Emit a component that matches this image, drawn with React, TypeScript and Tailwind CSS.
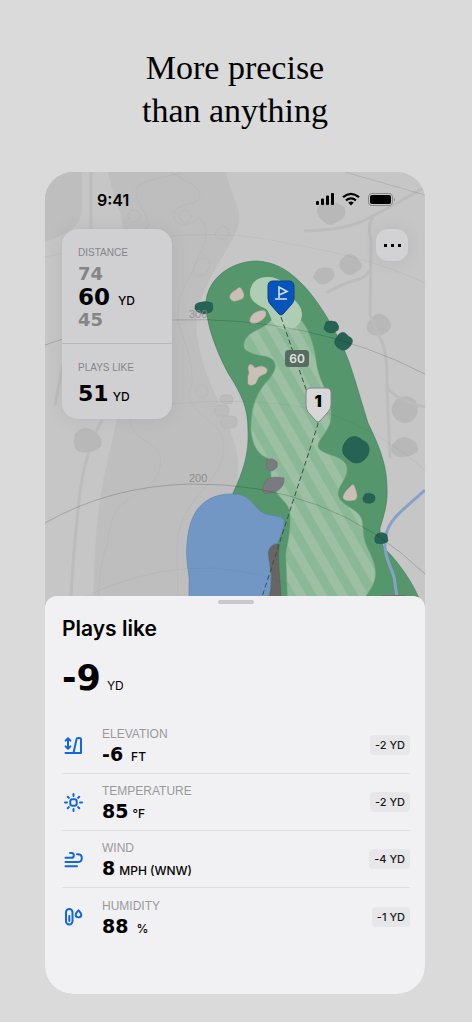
import React from "react";

const sans = "font-['Inter',sans-serif]";
const label = "font-['Liberation_Sans',sans-serif]";
const wide = "font-['DejaVu_Sans',sans-serif] font-bold";

function HoleMap() {
  return (
    <svg
      className="absolute inset-0 h-full w-full"
      viewBox="45 172 380 440"
      preserveAspectRatio="xMidYMin slice"
      role="img"
      aria-label="Hole map"
    >
      <defs>
        <pattern id="mow" width="18" height="18" patternUnits="userSpaceOnUse" patternTransform="rotate(-30 250 340)">
          <rect width="18" height="18" fill="#8bb896" />
          <rect width="9" height="18" fill="#9dbfa3" />
        </pattern>
      </defs>
      <rect x="0" y="100" width="500" height="550" fill="#c6c6c6" />

      <g fill="#bebebe">
        <path d="M45 172H82V208Q82 219 74 227Q66 234 58 237L45 242Z" />
        <path d="M108 172H226C231 197 243 208 238 227C230 248 215 265 205 290C195 310 194 330 201 355C208 385 225 410 232 436C240 458 240 475 233 497L250 612H93C94 545 98 500 106 468C116 425 122 400 123 360C123 300 127 235 120 212Q115 202 108 172Z" />
      </g>
      <g fill="#b8b8b8" stroke="#b0b0b0" strokeWidth=".6" strokeDasharray="1 1">
        <path d="M318 207Q325 200 336 203L344 207Q347 214 342 219L333 224Q328 226 323 221Q315 214 318 207Z" />
        <path d="M341 260Q348 251 355 256L361 263Q363 269 356 272Q350 278 344 272Q337 267 341 260Z" />
        <path d="M317 270Q324 266 332 269Q336 275 332 280Q324 286 318 283L313 277Z" />
        <path d="M372 318Q377 311 385 316Q394 324 389 330Q381 338 371 334Q362 328 372 318Z" />
        <path d="M396 400Q406 393 415 400Q421 411 413 420Q404 426 396 419Q388 410 396 400Z" />
        <path d="M393 444Q402 433 412 440Q420 445 417 452Q406 459 396 456Q388 450 393 444Z" />
        <path d="M75 434Q83 425 92 430Q103 436 101 446Q94 453 84 452Q74 452 74 442Z" />
      </g>
      <g fill="#bcbcbc" stroke="#b2b2b2" strokeWidth=".6">
        <rect x="220" y="395" width="13" height="9" rx="4" />
        <rect x="215" y="405" width="14" height="11" rx="5" />
        <rect x="221" y="416" width="16" height="12" rx="5" />
      </g>
      <g fill="none" stroke="#bcbcbc" strokeWidth="3">
        <path d="M304 231C335 230 352 227 369 218L399 202L425 187" />
        <path d="M373 217Q367 225 371 240L370 315Q376 329 382 342Q388 355 387 390L390 458" />
        <path d="M326 293Q341 284 356 280Q366 278 371 269M387 388Q400 402 425 407" />
        <path d="M91 172V229M102 420L96 432M89 452Q81 475 78 510Q73 555 70 612M66 350L55 405" />
      </g>
      <g fill="none" stroke="#b1b1b1" strokeWidth=".7" strokeDasharray="1.5 1">
        <path d="M182 172C166 178 137 180 136 190C135 203 151 218 148 226C143 239 120 220 110 240" />
        <path d="M170 172Q196 185 200 193C201 209 173 200 174 217C175 227 190 226 199 218C210 226 207 240 198 258C188 285 173 297 179 325C186 347 193 360 192 385C185 400 190 405 214 425C231 441 225 463 207 485C190 505 177 520 177 550L178 612" />
        <path d="M130 419C132 441 153 439 160 455C163 476 151 485 135 495C111 508 110 525 107 545C99 568 98 590 99 612" />
        <circle cx="134" cy="216" r="6" />
        <circle cx="185" cy="216" r="6" />
        <path d="M218 230Q220 225 226 227Q232 234 226 239L218 239Q213 235 218 230Z" />
        <ellipse cx="202" cy="267" rx="7" ry="10" transform="rotate(35 202 267)" />
        <circle cx="202" cy="391" r="6" />
      </g>

      <path
        d="M257 261C231 261 207 279 206 303C206 325 217 352 228 373C242 395 248 408 248 430C249 453 244 470 233 493L250 612H424C416 585 399 564 390 554C381 546 380 540 380 528C384 515 388 503 387 487C387 462 376 440 368 423C358 391 352 367 343 347C329 318 313 294 300 282C286 268 273 262 257 261Z"
        fill="#56966d"
        stroke="#3d7a55"
        strokeWidth=".6"
      />
      <path
        d="M272 319C266 329 250 330 245 340C240 352 253 354 264 356C275 358 280 365 270 378C255 394 251 408 251 430C252 443 257 455 268 458C273 466 269 475 273 487C279 500 289 501 290 514C291 541 285 546 286 560L288 612H357L365 597C378 581 378 571 370 553C362 539 364 532 362 520C358 507 338 506 338 493C339 484 348 478 347 468C345 454 321 456 318 447C317 439 331 431 331 416C332 398 320 383 317 367C315 351 312 335 302 321Z"
        fill="url(#mow)"
        stroke="#75a886"
        strokeWidth=".5"
      />
      <path
        d="M266 277C256 277 250 285 250 293C250 302 260 306 266 309C270 313 270 318 274 324C284 334 301 330 302 315C302 307 298 303 292 298C290 284 278 276 266 277Z"
        fill="#aecdb2"
      />
      <g fill="#cbbeb5" stroke="#b5aaa0" strokeWidth=".5">
        <path d="M236 290Q240 285 242 290Q247 298 239 300Q232 303 230 298Q229 293 236 290Z" />
        <path d="M253 314Q260 309 265 311Q268 315 262 320Q253 326 250 322Q249 318 253 314Z" />
        <path d="M249 365Q252 363 255 368Q263 364 267 369Q268 374 262 375Q258 376 256 383Q252 387 248 384L248 376Q250 373 248 368Z" />
        <path d="M350 487Q354 482 355 488Q359 497 355 500Q345 502 343 498Q343 493 350 487Z" />
      </g>
      <g fill="#7b7a80" stroke="#68696b" strokeWidth=".6">
        <path d="M267 460Q272 457 277 462Q279 468 272 471Q264 470 267 460Z" />
        <path d="M267 479Q273 476 284 478Q285 486 277 491L265 494Q261 489 264 484Z" />
      </g>
      <path d="M278 544Q269 545 268 553L272 575L269 612H281C282 584 277 570 279 544Z" fill="#696563" stroke="#555" strokeWidth=".5" />
      <path
        d="M234 494C208 493 192 507 188 535C184 560 190 572 189 583V612H262L270 591C273 572 268 562 268 552C270 545 275 543 277 544C281 535 285 526 284 520C280 513 266 519 257 508C250 499 244 494 234 494Z"
        fill="#7297c5"
        stroke="#5e80ad"
        strokeWidth=".6"
      />
      <path d="M425 490C404 509 389 519 386 535C382 554 391 566 394 577L397 597" fill="none" stroke="#86a1c8" strokeWidth="3" />
      <path d="M382 595H405V600H382Z" fill="#6f7173" />
      <g fill="#276355" stroke="#1d5548" strokeWidth=".6">
        <path d="M198 303Q206 300 212 303Q214 309 211 312L204 314L198 312Q193 309 196 304Z" />
        <path d="M326 322Q331 320 336 322Q340 326 338 330L333 333Q325 333 324 328Z" />
        <path d="M339 334Q344 330 348 336Q355 339 351 345Q347 351 342 350Q333 346 335 340Z" />
        <path d="M349 438Q356 434 362 440Q370 443 369 451Q368 458 361 462Q354 465 348 459Q341 454 343 447Q344 442 349 438Z" />
        <path d="M365 494Q369 492 374 495Q377 501 371 503Q362 504 363 498Z" />
        <path d="M377 534Q383 531 387 535L388 541Q384 545 376 543Q373 538 377 534Z" />
      </g>

      <g fill="none" stroke="#000" strokeWidth=".8">
        <path d="M45 345Q110 320 172 320Q310 315 425 374" opacity=".2" />
        <path d="M45 523Q110 486 190 484Q330 482 425 574" opacity=".22" />
        <path d="M45 257Q200 220 290 244Q370 257 425 283M80 599Q190 545 290 585M170 404Q250 396 320 410Q380 430 425 470" opacity=".05" />
        <path d="M345 172L425 195" opacity=".13" />
      </g>
      <g fill="#8c8c8c" fontFamily="'Liberation Sans', sans-serif" fontSize="11">
        <text x="189" y="318" opacity=".8">300</text>
        <text x="189" y="482">200</text>
      </g>
      <path d="M281 317L318 424L262 597" fill="none" stroke="#3a5143" strokeWidth="1" strokeDasharray="5 3" />

      <path d="M273 281H289Q294 281 294 286V298Q294 302 291 305L283 314Q281 316 279 314L271 305Q268 302 268 298V286Q268 281 273 281Z" fill="#0754bd" stroke="#123f83" />
      <path d="M275 299H287M279 298V287L287 291.5L279 295" fill="none" stroke="#d9e3ef" strokeWidth="1.6" />
      <rect x="285" y="350" width="24" height="17" rx="3.5" fill="#596b60" />
      <text x="297" y="363" textAnchor="middle" fill="#e0e4e1" fontFamily="Inter, sans-serif" fontWeight="600" fontSize="12">60</text>
      <path d="M311 388H326Q331 388 331 393V405Q331 409 328 412L320 421Q318 423 316 421L308 412Q306 409 306 405V393Q306 388 311 388Z" fill="#d7d7d7" stroke="#858585" />
      <text x="318" y="407" textAnchor="middle" fontFamily="Inter, sans-serif" fontWeight="900" fontSize="16">1</text>
    </svg>
  );
}

function StatusIcons() {
  return (
    <svg width="84" height="16" viewBox="0 0 84 16" aria-hidden="true">
      <rect x="0" y="9" width="3" height="4" rx="1" />
      <rect x="5" y="6.5" width="3" height="6.5" rx="1" />
      <rect x="10" y="3.5" width="3" height="9.5" rx="1" />
      <rect x="15" y="1" width="3" height="12" rx="1" />
      <g fill="none" stroke="#000" strokeWidth="2.3">
        <path d="M27 5.2Q35 -1.5 43 5.2M30 8.4Q35 4.4 40 8.4" />
      </g>
      <path d="M32.2 10.6Q35 8.6 37.8 10.6L35 13.4Z" />
      <rect x="52.5" y="1.5" width="24" height="12" rx="3.5" fill="none" stroke="#888" />
      <rect x="54" y="3" width="21" height="9" rx="2" />
      <path d="M78 5.5Q80 7.5 78 9.5Z" fill="#888" />
    </svg>
  );
}

function ElevationIcon() {
  return (
    <>
      <path d="M1.5 17H17V3.5Q17 2 15.5 2H14.2Q12.8 2 12.5 3.4L9.5 17" />
      <path d="M4 2.4V12.6M1.6 4.6L4 2.2L6.4 4.6M1.6 10.4L4 12.8L6.4 10.4" />
    </>
  );
}
function SunIcon() {
  return (
    <>
      <rect x="6.3" y="6.3" width="6.4" height="6.4" rx="2" />
      <path d="M9.5 1V3M9.5 16V18M1 9.5H3M16 9.5H18M3.7 3.7L4.9 4.9M14.1 14.1L15.3 15.3M15.3 3.7L14.1 4.9M4.9 14.1L3.7 15.3" />
    </>
  );
}
function WindIcon() {
  return (
    <>
      <path d="M1.5 7.8H7.5Q9.8 7.8 9.8 5.4Q9.8 3 7.5 3H6" />
      <path d="M1.5 12H14Q17.8 12 17.8 8.2Q17.8 4.2 14 4.2H13" />
      <path d="M1.5 16.2H13" />
    </>
  );
}
function HumidityIcon() {
  return (
    <>
      <rect x="2" y="2" width="6.5" height="15.5" rx="3.2" />
      <path d="M5.3 9V14" strokeWidth="2" />
      <path d="M14.5 3.3C13 5 11.7 6.2 11.7 7.8Q11.7 10.3 14.5 10.3Q17.3 10.3 17.3 7.8C17.3 6.2 16 5 14.5 3.3Z" />
    </>
  );
}

const factors = [
  { name: "ELEVATION", value: "-6", unit: "FT", effect: "-2 YD", gap: "gap-2", Icon: ElevationIcon },
  { name: "TEMPERATURE", value: "85", unit: "°F", effect: "-2 YD", gap: "gap-1", Icon: SunIcon },
  { name: "WIND", value: "8", unit: "MPH (WNW)", effect: "-4 YD", gap: "gap-1", Icon: WindIcon },
  { name: "HUMIDITY", value: "88", unit: "%", effect: "-1 YD", gap: "gap-2", Icon: HumidityIcon },
];

export default function App() {
  return (
    <main className={`bg-[#dadada] pt-[46px] pr-[47px] pb-7 pl-[45px] text-black ${sans}`}>
      <h1 className="text-center font-['Liberation_Serif',serif] text-[34px] leading-[43px]">
        More precise
        <br />
        than anything
      </h1>
      <div className="mt-10 overflow-hidden rounded-[28px] bg-[#c6c6c6]">
        <section className="relative h-[440px]">
          <HoleMap />
          <div className="relative px-[17px] pt-5">
            <div className="flex h-4 items-center justify-between pr-2 pl-[35px]">
              <span className="text-[16px] leading-4 font-semibold">9:41</span>
              <StatusIcons />
            </div>
            <div className="mt-[21px] flex items-start justify-between">
              <div className="w-[110px] rounded-[16px] bg-[#d0d0d3] shadow-[0_0_16px_rgba(90,90,110,0.12)]">
                <div className="h-[115px] border-b border-[#b9b9bc] px-4 pt-[18px]">
                  <p className={`text-[10px] leading-3 text-[#858588] ${label}`}>DISTANCE</p>
                  <p className={`mt-[3px] text-[18px] leading-6 text-[#858588] ${wide}`}>74</p>
                  <p className="flex h-[22px] items-baseline gap-2 leading-[22px]">
                    <span className={`text-[23px] ${wide}`}>60</span>
                    <span className="text-[12px] font-medium">YD</span>
                  </p>
                  <p className={`text-[18px] leading-6 text-[#858588] ${wide}`}>45</p>
                </div>
                <div className="h-[75px] px-4 pt-[18px]">
                  <p className={`text-[10px] leading-3 text-[#858588] ${label}`}>PLAYS LIKE</p>
                  <p className="mt-2 flex h-6 items-baseline gap-1 leading-6">
                    <span className={`text-[22px] ${wide}`}>51</span>
                    <span className="text-[12px] font-medium">YD</span>
                  </p>
                </div>
              </div>
              <button
                aria-label="More"
                className="flex size-8 items-center justify-center gap-1 rounded-[12px] bg-[#d2d2d5] shadow-[0_0_16px_rgba(90,90,110,0.12)]"
              >
                <span className="size-[3px] bg-black" />
                <span className="size-[3px] bg-black" />
                <span className="size-[3px] bg-black" />
              </button>
            </div>
          </div>
        </section>

        <section className="relative -mt-4 rounded-t-[12px] bg-[#f1f1f3] pt-1 pr-[15px] pb-[49px] pl-[17px]">
          <div className="mx-auto h-1 w-9 rounded-full bg-[#c9c9cb]" />
          <h2 className="mt-[11px] text-[21px] leading-7 font-semibold">Plays like</h2>
          <p className="mt-[15px] flex h-10 items-baseline gap-1.5 leading-10">
            <span className={`text-[35px] ${wide}`}>-9</span>
            <span className="text-[12px]">YD</span>
          </p>
          <ul className="mt-[19px] divide-y divide-[#dedee1]">
            {factors.map(({ name, value, unit, effect, gap, Icon }) => (
              <li key={name} className="flex h-[57px] items-center">
                <svg
                  width="24"
                  height="19"
                  viewBox="-2 0 24 19"
                  fill="none"
                  stroke="#1266e3"
                  strokeWidth="2"
                  strokeLinecap="round"
                  strokeLinejoin="round"
                  aria-hidden="true"
                >
                  <Icon />
                </svg>
                <div className="ml-4 flex-1 pb-0.5">
                  <p className={`text-[12px] leading-5 text-[#99999c] ${label}`}>{name}</p>
                  <p className={`flex h-5 items-baseline leading-5 ${gap}`}>
                    <span className={`text-[19px] ${wide}`}>{value}</span>
                    <span className="text-[12px] font-medium">{unit}</span>
                  </p>
                </div>
                <span className="rounded-[4px] bg-[#e7e7e9] px-[5px] text-[11px] leading-5 font-medium text-[#19191a]">
                  {effect}
                </span>
              </li>
            ))}
          </ul>
        </section>
      </div>
    </main>
  );
}
